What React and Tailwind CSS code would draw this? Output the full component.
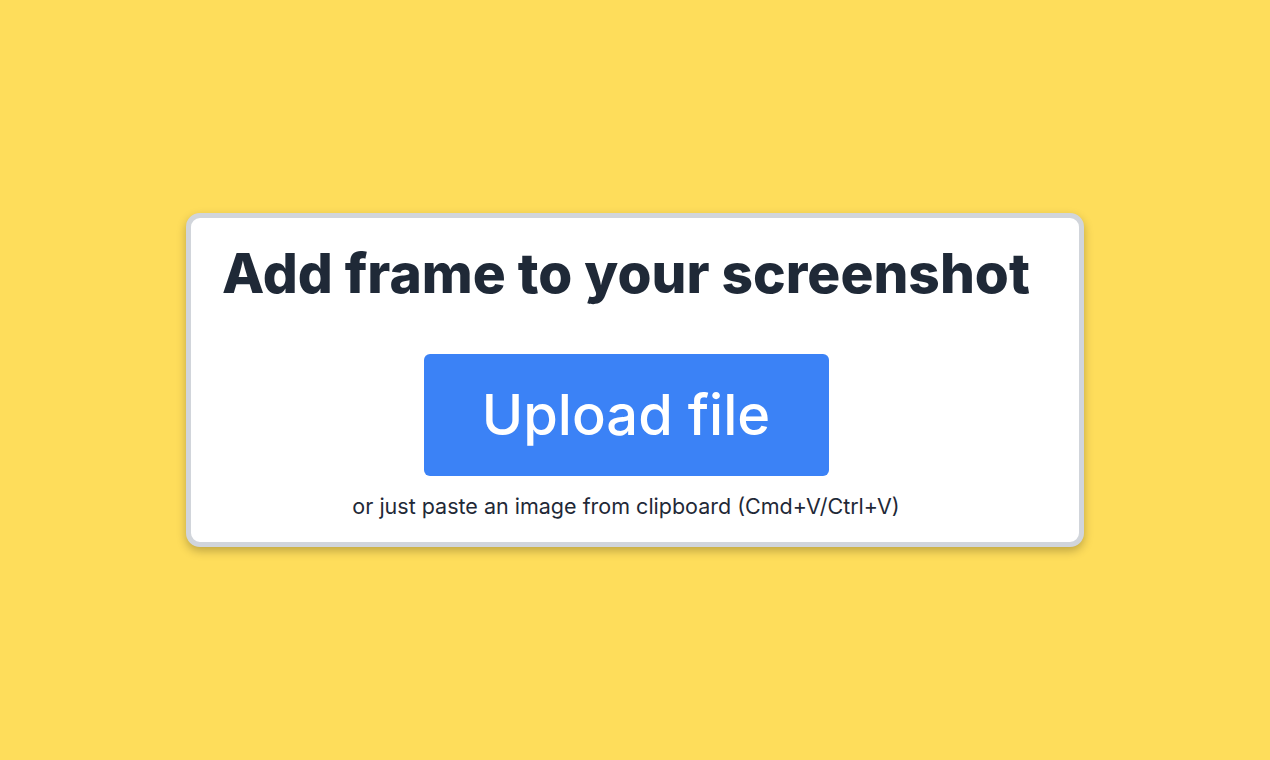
const App = () => {
    return (
        <div className="min-h-screen w-full flex items-center justify-center bg-[#fedd5b]" style={{ fontFamily: "Inter, 'Noto Sans', sans-serif" }}>
            {/* card */}
            <div className="w-[898px] h-[334px] bg-white border-[5px] border-[#d1d5db] rounded-[14px] shadow-[0_4px_10px_rgba(0,0,0,0.25)] pl-[30px] pr-[48px] pt-[25px]">
                <div className="flex flex-col items-center">
                    <h1 className="text-[55px] leading-[60px] font-extrabold text-[#1f2937] whitespace-nowrap">
                        Add frame to your screenshot
                    </h1>
                    <button className="mt-[51px] w-[405px] h-[122px] bg-[#3b82f6] rounded-md text-white text-[56px] font-medium">
                        Upload file
                    </button>
                    <p className="mt-[16px] text-[21.5px] leading-[28px] text-[#1f2937]">
                        or just paste an image from clipboard (Cmd+V/Ctrl+V)
                    </p>
                </div>
            </div>
        </div>
    );
};

export default App;
